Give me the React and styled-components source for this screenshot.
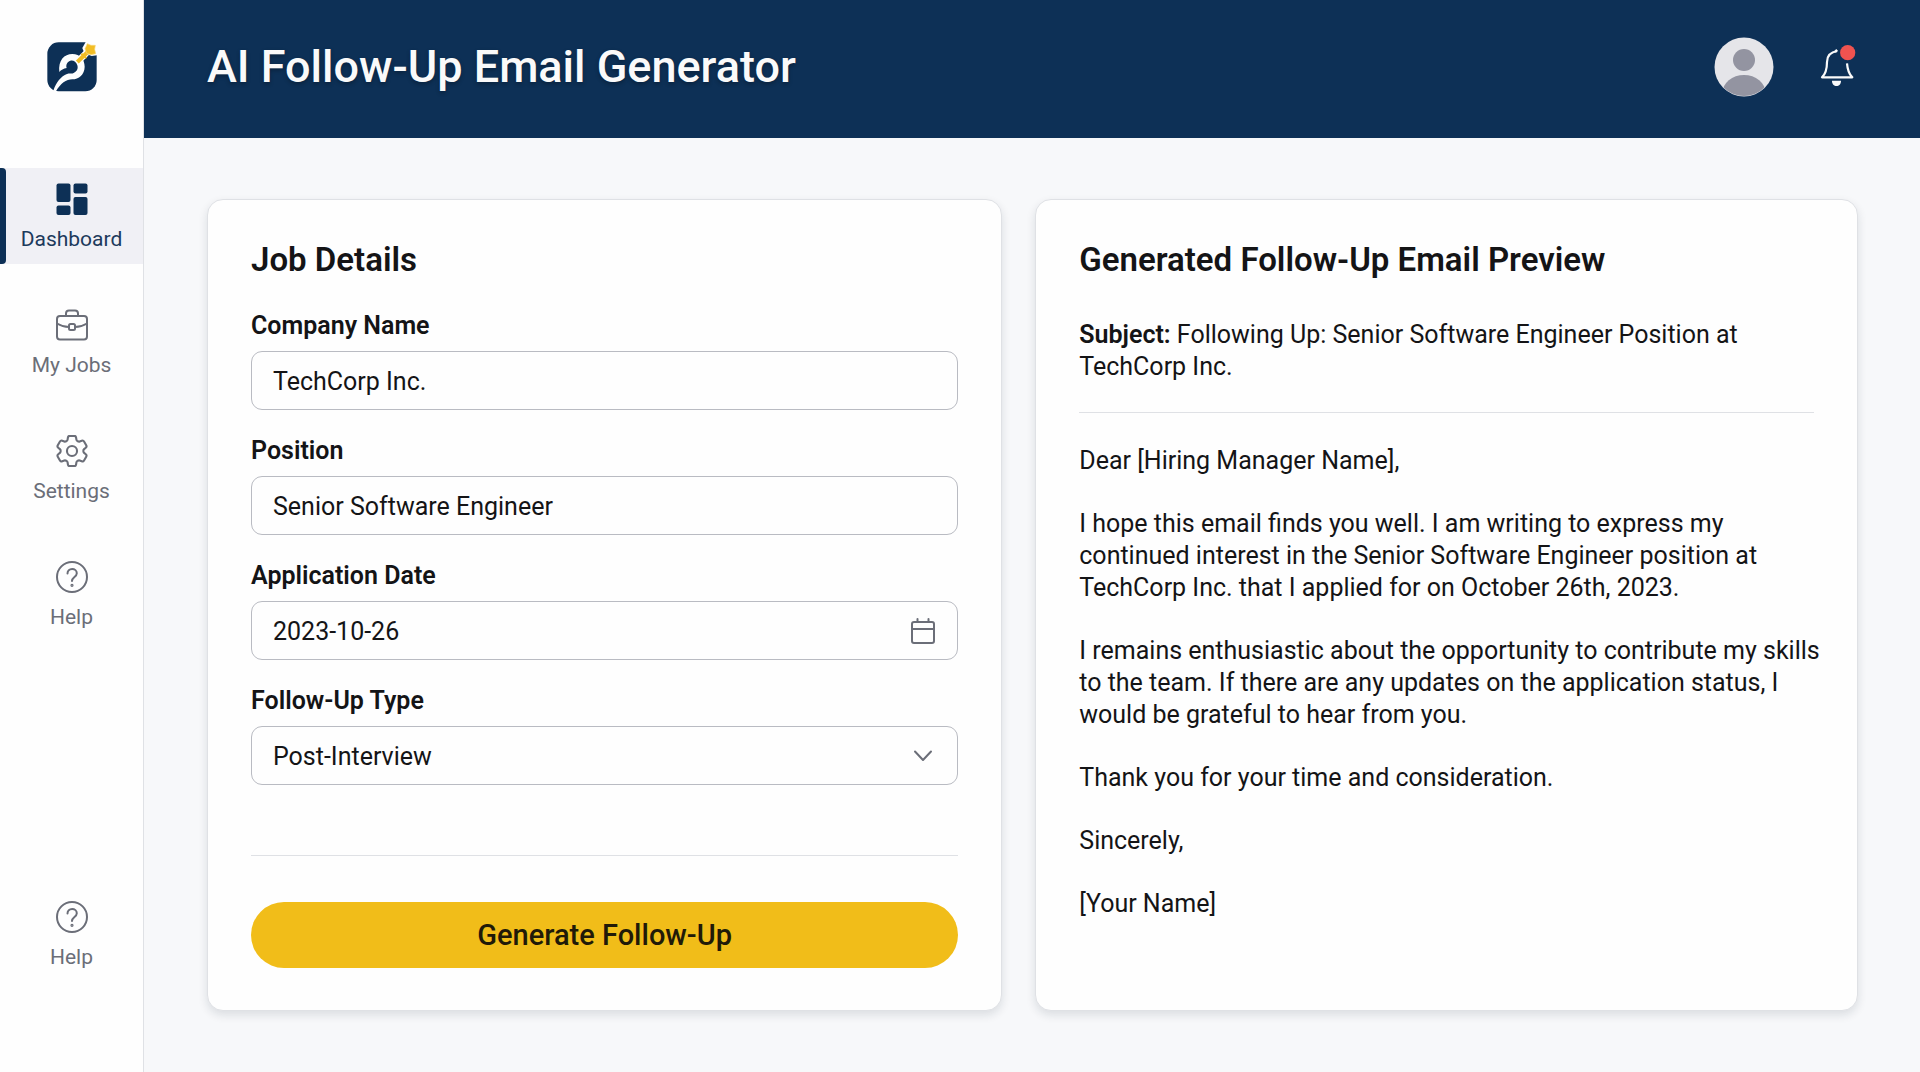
import React, { useState } from 'react';
import styled, { createGlobalStyle } from 'styled-components';

const navy = '#0d3056';
const ink = '#141416';
const muted = '#6b6e78';
const line = '#dfe1e5';

const GlobalStyle = createGlobalStyle`
  *, *::before, *::after {
    box-sizing: border-box;
  }

  body {
    margin: 0;
    background: #f7f8fa;
    color: ${ink};
    font-family: Roboto, 'Liberation Sans', sans-serif;
  }

  button, input, select {
    font-family: inherit;
    color: inherit;
  }
`;

const Layout = styled.div`
  display: flex;
  min-height: 100vh;
`;

const Sidebar = styled.nav`
  display: flex;
  flex-direction: column;
  flex: 0 0 144px;
  padding: 42px 0 90px;
  background: #fefefe;
  border-right: 1px solid ${line};
`;

const Brand = styled.a`
  display: block;
  align-self: center;
  height: 50px;
  margin-bottom: 76px;
`;

const NavList = styled.ul`
  display: flex;
  flex-direction: column;
  flex: 1;
  gap: 30px;
  margin: 0;
  padding: 0;
  list-style: none;
`;

const NavItem = styled.li`
  margin-top: ${({ $bottom }) => ($bottom ? 'auto' : '0')};
`;

const NavLink = styled.a`
  position: relative;
  display: flex;
  flex-direction: column;
  align-items: center;
  gap: 10px;
  height: 96px;
  padding-top: 15px;
  background: ${({ $active }) => ($active ? '#f0f0f5' : 'transparent')};
  color: ${({ $active }) => ($active ? '#1d3a5c' : muted)};
  font-size: 21px;
  line-height: 28px;
  text-decoration: none;

  &::before {
    content: '';
    display: ${({ $active }) => ($active ? 'block' : 'none')};
    position: absolute;
    top: 0;
    bottom: 0;
    left: 0;
    width: 6px;
    border-radius: 0 4px 4px 0;
    background: ${navy};
  }
`;

const Page = styled.div`
  display: flex;
  flex-direction: column;
  flex: 1;
  min-width: 0;
`;

const Header = styled.header`
  display: flex;
  align-items: center;
  gap: 46px;
  height: 138px;
  padding: 0 64px 4px 63px;
  background: ${navy};
`;

const PageTitle = styled.h1`
  flex: 1;
  margin: 0;
  color: #fafafa;
  font-size: 45px;
  font-weight: 500;
  line-height: 54px;
  text-shadow: 0 2px 4px rgba(0, 0, 0, 0.3);
`;

const IconButton = styled.button`
  display: flex;
  padding: 0;
  border: 0;
  background: none;
  color: ${muted};
  cursor: pointer;
`;

const Main = styled.main`
  display: grid;
  grid-template-columns: 29fr 30fr;
  gap: 33px;
  flex: 1;
  padding: 61px 62px 61px 63px;
`;

const Card = styled.section`
  display: flex;
  flex-direction: column;
  padding: 41px 43px 42px;
  background: #fefefe;
  border: 1px solid ${line};
  border-radius: 16px;
  box-shadow: 0 4px 10px rgba(20, 30, 50, 0.12);
`;

const CardTitle = styled.h2`
  margin: 0;
  font-size: 33px;
  font-weight: 600;
  line-height: 38px;
`;

const Form = styled.form`
  display: flex;
  flex-direction: column;
  flex: 1;
  gap: 26px;
  padding-top: 32px;
`;

const Field = styled.div`
  display: flex;
  flex-direction: column;
  gap: 10px;
`;

const Label = styled.label`
  font-size: 25px;
  font-weight: 600;
  line-height: 30px;
`;

const Control = styled.div`
  position: relative;
  display: flex;
  align-items: center;
  height: 59px;
  border: 1px solid #b9bbc2;
  border-radius: 11px;
  overflow: hidden;
`;

const TextInput = styled.input`
  flex: 1;
  min-width: 0;
  height: 100%;
  padding: 1px 21px 0;
  border: 0;
  outline: 0;
  background: transparent;
  font-size: 25px;
`;

const Select = styled.select`
  flex: 1;
  height: 100%;
  padding: 1px 21px 0;
  border: 0;
  outline: 0;
  appearance: none;
  background: transparent;
  font-size: 25px;
`;

const CalendarButton = styled(IconButton)`
  margin-right: 21px;
`;

const SelectArrow = styled.span`
  position: absolute;
  right: 24px;
  display: flex;
  color: ${muted};
  pointer-events: none;
`;

const Actions = styled.div`
  margin-top: auto;
  padding-top: 46px;
  border-top: 1px solid ${line};
`;

const SubmitButton = styled.button`
  width: 100%;
  height: 66px;
  border: 0;
  border-radius: 33px;
  background: #f1bd19;
  color: #211a08;
  font-size: 29px;
  font-weight: 500;
  cursor: pointer;
`;

const Subject = styled.p`
  margin: 0;
  padding: 40px 0 29px;
  border-bottom: 1px solid ${line};
  font-size: 25px;
  line-height: 32px;

  strong {
    font-weight: 600;
  }
`;

const Message = styled.div`
  display: flex;
  flex-direction: column;
  gap: 31px;
  margin-right: -12px;
  padding-top: 32px;
  font-size: 25px;
  line-height: 32px;

  p {
    margin: 0;
  }
`;

const Logo = () => (
  <svg width="50" height="50" viewBox="0 0 150 150" aria-hidden="true">
    <rect x="1" y="1" width="148" height="147" rx="34" fill={navy} />
    <path d="M116 0H150V40L134 42L112 34L106 18Z" fill="#fefefe" />
    <path
      d="M37 90C33 55 52 36 76 36C100 36 113 54 113 74C113 98 95 112 76 112C58 112 40 125 27 148L19 146C28 120 42 104 58 97C66 91 72 97 80 93C90 89 94 80 91 70C88 58 78 54 70 56C60 59 56 70 59 78C50 80 42 84 37 90Z"
      fill="#fefefe"
    />
    <path d="M90 61L118 33" stroke="#fefefe" strokeWidth="20" />
    <path d="M91 60L122 30" stroke="#f2bd25" strokeWidth="12" />
    <path d="M103 35L118 49" stroke="#f2bd25" strokeWidth="6" />
    <path
      d="M121 5L132 10L145 10L143 22L146 35L132 38L119 34L114 20Z"
      fill="#f2bd25"
      stroke="#f7d878"
      strokeWidth="2"
    />
  </svg>
);

const StrokeIcon = ({ size = 32, viewBox = '0 0 32 32', children }) => (
  <svg
    width={size}
    height={size}
    viewBox={viewBox}
    fill="none"
    stroke="currentColor"
    strokeWidth="2"
    strokeLinecap="round"
    strokeLinejoin="round"
    aria-hidden="true"
  >
    {children}
  </svg>
);

const DashboardIcon = () => (
  <svg width="32" height="32" viewBox="0 0 32 32" fill={navy} aria-hidden="true">
    <rect x="0.5" y="0.5" width="14" height="18.5" rx="2" />
    <rect x="17.5" y="0.5" width="14" height="10" rx="2" />
    <rect x="0.5" y="22.5" width="14" height="9.5" rx="2" />
    <rect x="17.5" y="14" width="14" height="18" rx="2" />
  </svg>
);

const BriefcaseIcon = () => (
  <StrokeIcon>
    <rect x="1" y="7" width="30" height="23.5" rx="3" />
    <path d="M10 7V4.5a3 3 0 0 1 3-3h6a3 3 0 0 1 3 3V7" />
    <path d="M1 14.5C5 17 9 18 13 18M19 18c4 0 8-1 12-3.5" />
    <rect x="13" y="15" width="6" height="6" rx="1.5" />
  </StrokeIcon>
);

const GearIcon = () => (
  <StrokeIcon viewBox="2.5 2.5 19 19">
    <g strokeWidth="1.25">
      <path d="M9.594 3.94c.09-.542.56-.94 1.11-.94h2.593c.55 0 1.02.398 1.11.94l.213 1.281c.063.374.313.686.645.87.074.04.147.083.22.127.325.196.72.257 1.075.124l1.217-.456a1.125 1.125 0 0 1 1.37.49l1.296 2.247a1.125 1.125 0 0 1-.26 1.431l-1.003.827c-.293.241-.438.613-.43.992a7.723 7.723 0 0 1 0 .255c-.008.378.137.75.43.991l1.004.827c.424.35.534.955.26 1.43l-1.298 2.247a1.125 1.125 0 0 1-1.369.491l-1.217-.456c-.355-.133-.75-.072-1.076.124a6.47 6.47 0 0 1-.22.128c-.331.183-.581.495-.644.869l-.213 1.281c-.09.543-.56.94-1.11.94h-2.594c-.55 0-1.019-.398-1.11-.94l-.213-1.281c-.062-.374-.312-.686-.644-.87a6.52 6.52 0 0 1-.22-.127c-.325-.196-.72-.257-1.076-.124l-1.217.456a1.125 1.125 0 0 1-1.369-.49l-1.297-2.247a1.125 1.125 0 0 1 .26-1.431l1.004-.827c.292-.24.437-.613.43-.991a6.932 6.932 0 0 1 0-.255c.007-.38-.138-.751-.43-.992l-1.004-.827a1.125 1.125 0 0 1-.26-1.43l1.297-2.247a1.125 1.125 0 0 1 1.37-.491l1.216.456c.356.133.751.072 1.076-.124.072-.044.146-.086.22-.128.332-.183.582-.495.644-.869l.214-1.28Z" />
      <circle cx="12" cy="12" r="3" />
    </g>
  </StrokeIcon>
);

const HelpIcon = () => (
  <StrokeIcon>
    <circle cx="16" cy="16" r="15" />
    <path d="M11.5 12.5c0-2.6 2-4.5 4.6-4.5s4.7 1.8 4.7 4.3c0 3.7-4.8 3.7-4.8 7.7" />
    <circle cx="16" cy="24.3" r="0.6" />
  </StrokeIcon>
);

const CalendarIcon = () => (
  <StrokeIcon size={26} viewBox="0 0 26 26">
    <rect x="2" y="4" width="22" height="21" rx="2" />
    <path d="M2 11h22M7.5 1v3M18.5 1v3" />
  </StrokeIcon>
);

const ChevronIcon = () => (
  <StrokeIcon size={20} viewBox="0 0 20 20">
    <path d="M2 5.5l8 8.5 8-8.5" />
  </StrokeIcon>
);

const AvatarIcon = () => (
  <svg width="60" height="60" viewBox="0 0 60 60" aria-hidden="true">
    <clipPath id="avatar">
      <circle cx="30" cy="30" r="29" />
    </clipPath>
    <circle cx="30" cy="30" r="29.5" fill="#e5e5e9" />
    <g fill="#9394a1" clipPath="url(#avatar)">
      <circle cx="30" cy="23" r="11" />
      <ellipse cx="30" cy="56" rx="21.5" ry="18" />
    </g>
  </svg>
);

const BellIcon = () => (
  <svg width="36" height="44" viewBox="0 0 36 44" aria-hidden="true">
    <g fill="none" stroke="#fafafa" strokeWidth="2.2" strokeLinejoin="round">
      <path d="M17.3 6C10.5 7 7 11 7 17C7 24 6 28.5 2 32.3H32.3C28.5 28.5 27.5 25 27 18.3" />
      <path d="M15 7L17 4.8" />
    </g>
    <path d="M12 35.7H21C21 39 19 41 16.5 41S12 39 12 35.7Z" fill="#fafafa" />
    <circle cx="27.7" cy="7.7" r="7.6" fill="#ef5350" />
  </svg>
);

const navItems = [
  { id: 'dashboard', label: 'Dashboard', icon: DashboardIcon, active: true },
  { id: 'jobs', label: 'My Jobs', icon: BriefcaseIcon },
  { id: 'settings', label: 'Settings', icon: GearIcon },
  { id: 'help', label: 'Help', icon: HelpIcon },
  { id: 'support', label: 'Help', icon: HelpIcon, bottom: true },
];

const paragraphs = [
  'Dear [Hiring Manager Name],',
  'I hope this email finds you well. I am writing to express my continued interest in the Senior Software Engineer position at TechCorp Inc. that I applied for on October 26th, 2023.',
  'I remains enthusiastic about the opportunity to contribute my skills to the team. If there are any updates on the application status, I would be grateful to hear from you.',
  'Thank you for your time and consideration.',
  'Sincerely,',
  '[Your Name]',
];

const JobForm = () => {
  const [job, setJob] = useState({
    company: 'TechCorp Inc.',
    position: 'Senior Software Engineer',
    date: '2023-10-26',
    type: 'Post-Interview',
  });

  const update = e => setJob({ ...job, [e.target.name]: e.target.value });

  return (
    <Form onSubmit={e => e.preventDefault()}>
      <Field>
        <Label htmlFor="company">Company Name</Label>
        <Control>
          <TextInput id="company" name="company" value={job.company} onChange={update} />
        </Control>
      </Field>
      <Field>
        <Label htmlFor="position">Position</Label>
        <Control>
          <TextInput id="position" name="position" value={job.position} onChange={update} />
        </Control>
      </Field>
      <Field>
        <Label htmlFor="date">Application Date</Label>
        <Control>
          <TextInput id="date" name="date" value={job.date} onChange={update} />
          <CalendarButton type="button" aria-label="Choose date">
            <CalendarIcon />
          </CalendarButton>
        </Control>
      </Field>
      <Field>
        <Label htmlFor="type">Follow-Up Type</Label>
        <Control>
          <Select id="type" name="type" value={job.type} onChange={update}>
            <option>Post-Interview</option>
            <option>Post-Application</option>
          </Select>
          <SelectArrow>
            <ChevronIcon />
          </SelectArrow>
        </Control>
      </Field>
      <Actions>
        <SubmitButton type="submit">Generate Follow-Up</SubmitButton>
      </Actions>
    </Form>
  );
};

const App = () => (
  <Layout>
    <GlobalStyle />
    <Sidebar>
      <Brand href="#" aria-label="Home">
        <Logo />
      </Brand>
      <NavList>
        {navItems.map(({ id, label, icon: Icon, active, bottom }) => (
          <NavItem key={id} $bottom={bottom}>
            <NavLink href={`#${id}`} $active={active}>
              <Icon />
              {label}
            </NavLink>
          </NavItem>
        ))}
      </NavList>
    </Sidebar>
    <Page>
      <Header>
        <PageTitle>AI Follow-Up Email Generator</PageTitle>
        <IconButton type="button" aria-label="Account">
          <AvatarIcon />
        </IconButton>
        <IconButton type="button" aria-label="Notifications">
          <BellIcon />
        </IconButton>
      </Header>
      <Main>
        <Card>
          <CardTitle>Job Details</CardTitle>
          <JobForm />
        </Card>
        <Card>
          <CardTitle>Generated Follow-Up Email Preview</CardTitle>
          <Subject>
            <strong>Subject:</strong> Following Up: Senior Software Engineer Position at TechCorp Inc.
          </Subject>
          <Message>
            {paragraphs.map(text => <p key={text}>{text}</p>)}
          </Message>
        </Card>
      </Main>
    </Page>
  </Layout>
);

export default App;
